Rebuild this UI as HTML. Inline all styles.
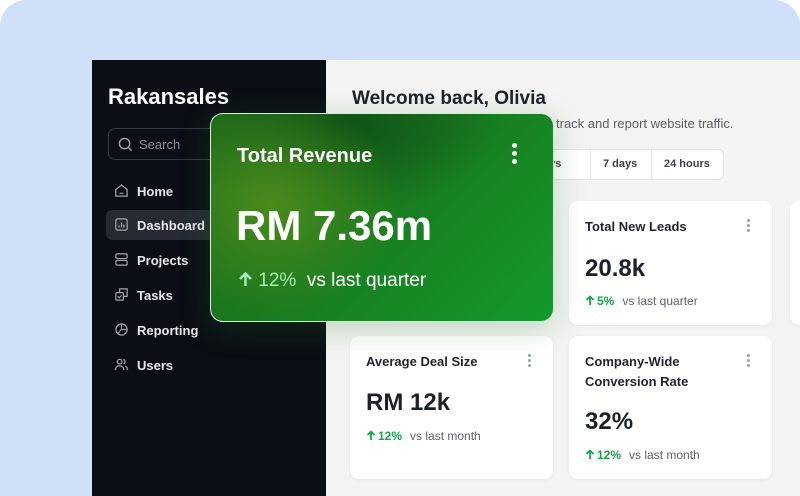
<!DOCTYPE html>
<html><head><meta charset="utf-8"><style>
*{box-sizing:border-box;margin:0;padding:0}
body{width:800px;height:496px;overflow:hidden;background:#fff;font-family:"Liberation Sans",sans-serif;position:relative}
.bg{position:absolute;inset:0;background:#cfe0f8;border-top-left-radius:26px;border-top-right-radius:26px}
.side{position:absolute;left:92px;top:60px;width:234px;height:436px;background:#0b0f15}
.main{position:absolute;left:326px;top:60px;width:474px;height:436px;background:#f3f3f3;overflow:hidden}
.logo{position:absolute;left:16px;top:24px;color:#fff;font-weight:bold;font-size:22px}
.search{position:absolute;left:16px;top:68px;width:140px;height:32px;border:1px solid #333a44;border-radius:7px;color:#8a9099;font-size:13px;padding:8px 0 0 30px}
.nav{position:absolute;left:14px;color:#e6e8eb;font-size:13px;font-weight:bold;height:30px;width:140px;padding:8px 0 0 31px;border-radius:6px}
.nav svg{position:absolute;left:8px;top:7px}
.act{background:#262b33}
h1{position:absolute;left:26px;top:28px;font-size:19px;color:#1d222a}
.sub{position:absolute;left:230px;top:56px;font-size:13px;color:#5b616b}
.seg{position:absolute;left:180px;top:89px;width:218px;height:31px;background:#fff;border:1px solid #e2e4e7;border-radius:6px;font-size:11px;font-weight:bold;color:#3b414a}
.seg span{position:absolute;top:8px}
.seg i{position:absolute;top:0;width:1px;height:29px;background:#e2e4e7}
.card{position:absolute;background:#fff;border-radius:9px;box-shadow:0 1px 3px rgba(0,0,0,.06)}
.card .t{position:absolute;left:16px;top:16px;font-size:13px;font-weight:bold;color:#1f242c;line-height:20px}
.card .v{position:absolute;left:16px;font-size:24px;font-weight:bold;color:#1b2029}
.card .d{position:absolute;left:16px;font-size:12px;color:#5b616b}
.card .d b{color:#16a34a;margin-right:8px}
.card .d svg{vertical-align:-1px;margin-right:2px}
.dots{position:absolute;right:22px;top:18px;width:3px}
.dots i{display:block;width:3px;height:3px;border-radius:50%;background:#9aa0a8;margin-bottom:2px}
.green{position:absolute;left:210px;top:113px;width:344px;height:209px;border-radius:13px;border:1.5px solid #d9efd9;
background:radial-gradient(ellipse 130px 110px at 60px 90px,#4a8a1c 0%,rgba(60,130,25,0) 100%),radial-gradient(ellipse 160px 90px at 130px 10px,#0f5216 0%,rgba(15,82,22,0) 100%),linear-gradient(135deg,#1e6b1a 0%,#1a7a1f 45%,#129a2c 100%);
box-shadow:0 6px 30px rgba(40,120,40,.25);color:#fff}
</style></head><body>
<div class="bg"></div>
<div class="side">
<div class="logo">Rakansales</div>
<div class="search"><svg style="position:absolute;left:9px;top:8px" width="15" height="15" viewBox="0 0 16 16" fill="none" stroke="#a0a6ae" stroke-width="1.5"><circle cx="7" cy="7" r="5.5"/><path d="M11 11l3.5 3.5"/></svg>Search</div>
<div class="nav" style="top:116px"><svg width="15" height="15" viewBox="0 0 16 16" fill="none" stroke="#a0a6ae" stroke-width="1.3"><path d="M2 7l6-5 6 5v7H2z M6 11h4"/></svg>Home</div>
<div class="nav act" style="top:150px"><svg width="15" height="15" viewBox="0 0 16 16" fill="none" stroke="#a0a6ae" stroke-width="1.3"><rect x="2" y="2" width="12" height="12" rx="2"/><path d="M5.5 11V9M8 11V6M10.5 11V8"/></svg>Dashboard</div>
<div class="nav" style="top:185px"><svg width="15" height="15" viewBox="0 0 16 16" fill="none" stroke="#a0a6ae" stroke-width="1.3"><rect x="2" y="2" width="12" height="5" rx="1.5"/><rect x="2" y="9" width="12" height="5" rx="1.5"/></svg>Projects</div>
<div class="nav" style="top:220px"><svg width="15" height="15" viewBox="0 0 16 16" fill="none" stroke="#a0a6ae" stroke-width="1.3"><rect x="2" y="6" width="8" height="8" rx="1"/><path d="M6 6V2h8v8h-4M4 10l1.5 1.5L8 9"/></svg>Tasks</div>
<div class="nav" style="top:255px"><svg width="15" height="15" viewBox="0 0 16 16" fill="none" stroke="#a0a6ae" stroke-width="1.3"><circle cx="8" cy="8" r="6"/><path d="M8 2v6h6M8 8l-4 4"/></svg>Reporting</div>
<div class="nav" style="top:290px"><svg width="15" height="15" viewBox="0 0 16 16" fill="none" stroke="#a0a6ae" stroke-width="1.3"><circle cx="6" cy="5" r="2.5"/><path d="M1.5 14c0-3 2-4.5 4.5-4.5s4.5 1.5 4.5 4.5M10 2.6a2.5 2.5 0 010 4.8M12 9.8c1.5.6 2.5 2 2.5 4.2"/></svg>Users</div>
</div>
<div class="main">
<h1>Welcome back, Olivia</h1>
<div class="sub">track and report website traffic.</div>
<div class="seg"><span style="left:14px">30 days</span><i style="left:83px"></i><span style="left:96px">7 days</span><i style="left:144px"></i><span style="left:157px">24 hours</span></div>
<div class="card" style="left:243px;top:141px;width:203px;height:124px"><div class="t">Total New Leads</div><div class="dots"><i></i><i></i><i></i></div><div class="v" style="top:54px">20.8k</div><div class="d" style="top:93px"><b><svg width="10" height="11" viewBox="0 0 10 11" fill="none" stroke="#16a34a" stroke-width="1.8"><path d="M5 10V1.5M1.5 5L5 1.5 8.5 5"/></svg>5%</b>vs last quarter</div></div>
<div class="card" style="left:464px;top:141px;width:40px;height:124px"></div>
<div class="card" style="left:24px;top:276px;width:203px;height:143px"><div class="t">Average Deal Size</div><div class="dots"><i></i><i></i><i></i></div><div class="v" style="top:53px">RM 12k</div><div class="d" style="top:93px"><b><svg width="10" height="11" viewBox="0 0 10 11" fill="none" stroke="#16a34a" stroke-width="1.8"><path d="M5 10V1.5M1.5 5L5 1.5 8.5 5"/></svg>12%</b>vs last month</div></div>
<div class="card" style="left:243px;top:276px;width:203px;height:143px"><div class="t">Company-Wide<br>Conversion Rate</div><div class="dots"><i></i><i></i><i></i></div><div class="v" style="top:72px">32%</div><div class="d" style="top:112px"><b><svg width="10" height="11" viewBox="0 0 10 11" fill="none" stroke="#16a34a" stroke-width="1.8"><path d="M5 10V1.5M1.5 5L5 1.5 8.5 5"/></svg>12%</b>vs last month</div></div>
</div>
<div class="green">
<div style="position:absolute;left:26px;top:31px;font-size:20px;font-weight:bold">Total Revenue</div>
<div style="position:absolute;left:301px;top:29px;width:5px"><i style="display:block;width:5px;height:5px;border-radius:50%;background:#fff;margin-bottom:3px"></i><i style="display:block;width:5px;height:5px;border-radius:50%;background:#fff;margin-bottom:3px"></i><i style="display:block;width:5px;height:5px;border-radius:50%;background:#fff"></i></div>
<div style="position:absolute;left:25px;top:88px;font-size:42px;font-weight:bold">RM 7.36m</div>
<div style="position:absolute;left:27px;top:156px;font-size:19px"><span style="color:#a7f0b5"><svg width="15" height="16" viewBox="0 0 15 16" fill="none" stroke="#a7f0b5" stroke-width="2.4" style="vertical-align:-1px"><path d="M7.5 15V2.5M2 8l5.5-5.5L13 8"/></svg> 12%</span>&nbsp;&nbsp;vs last quarter</div>
</div>
</body></html>
